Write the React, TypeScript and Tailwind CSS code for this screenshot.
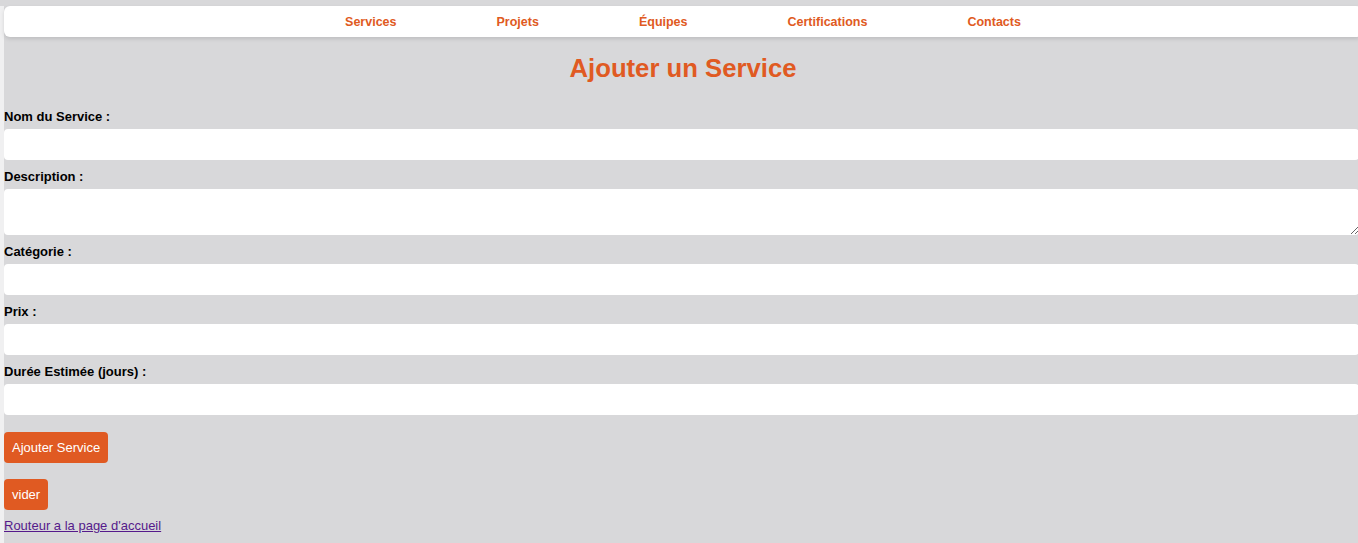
const navLinks = ["Services", "Projets", "Équipes", "Certifications", "Contacts"];

type Field = { id: string; label: string; multiline?: boolean };

const fields: Field[] = [
  { id: "nom", label: "Nom du Service :" },
  { id: "description", label: "Description :", multiline: true },
  { id: "categorie", label: "Catégorie :" },
  { id: "prix", label: "Prix :" },
  { id: "duree", label: "Durée Estimée (jours) :" },
];

export default function App() {
  return (
    <div className="h-[543px] overflow-hidden bg-[#d8d8da] pt-1.5 font-['Liberation_Sans',Arial,sans-serif]">
      <div className="h-full w-[1362px] border-l-4 border-[#f0f0f1]">
        <nav className="flex h-[31px] items-center justify-center gap-[100px] rounded-md bg-white pt-[2px] shadow-[0_2px_4px_rgba(0,0,0,0.12)]">
          {navLinks.map((link) => (
            <a
              key={link}
              href="#"
              className="text-[12.5px] font-bold leading-[15px] text-[#e05a22]"
            >
              {link}
            </a>
          ))}
        </nav>

        <h1 className="mt-4 text-center text-[25.7px] font-bold leading-[30px] text-[#e05a22]">
          Ajouter un Service
        </h1>

        <form className="mt-[26px] flex flex-col items-start">
          {fields.map((field) => (
            <div key={field.id} className="flex flex-col">
              <label
                htmlFor={field.id}
                className="mb-[5px] text-[13px] font-bold leading-[15px] text-black"
              >
                {field.label}
              </label>
              {field.multiline ? (
                <textarea
                  id={field.id}
                  className="mb-[9px] block h-[46px] w-[1355px] rounded-[4px] bg-white outline-none"
                />
              ) : (
                <input
                  id={field.id}
                  type="text"
                  className="mb-[9px] block h-[31px] w-[1355px] rounded-[4px] bg-white outline-none"
                />
              )}
            </div>
          ))}

          <button
            type="submit"
            className="mt-[8px] rounded-[4px] bg-[#e05a22] px-2 py-2 text-[13px] leading-[15px] text-white"
          >
            Ajouter Service
          </button>
          <button
            type="reset"
            className="mt-4 rounded-[4px] bg-[#e05a22] px-2 py-2 text-[13px] leading-[15px] text-white"
          >
            vider
          </button>
          <a
            href="#"
            className="mt-2 text-[13px] leading-[15px] text-[#551a8b] underline"
          >
            Routeur a la page d'accueil
          </a>
        </form>
      </div>
    </div>
  );
}
